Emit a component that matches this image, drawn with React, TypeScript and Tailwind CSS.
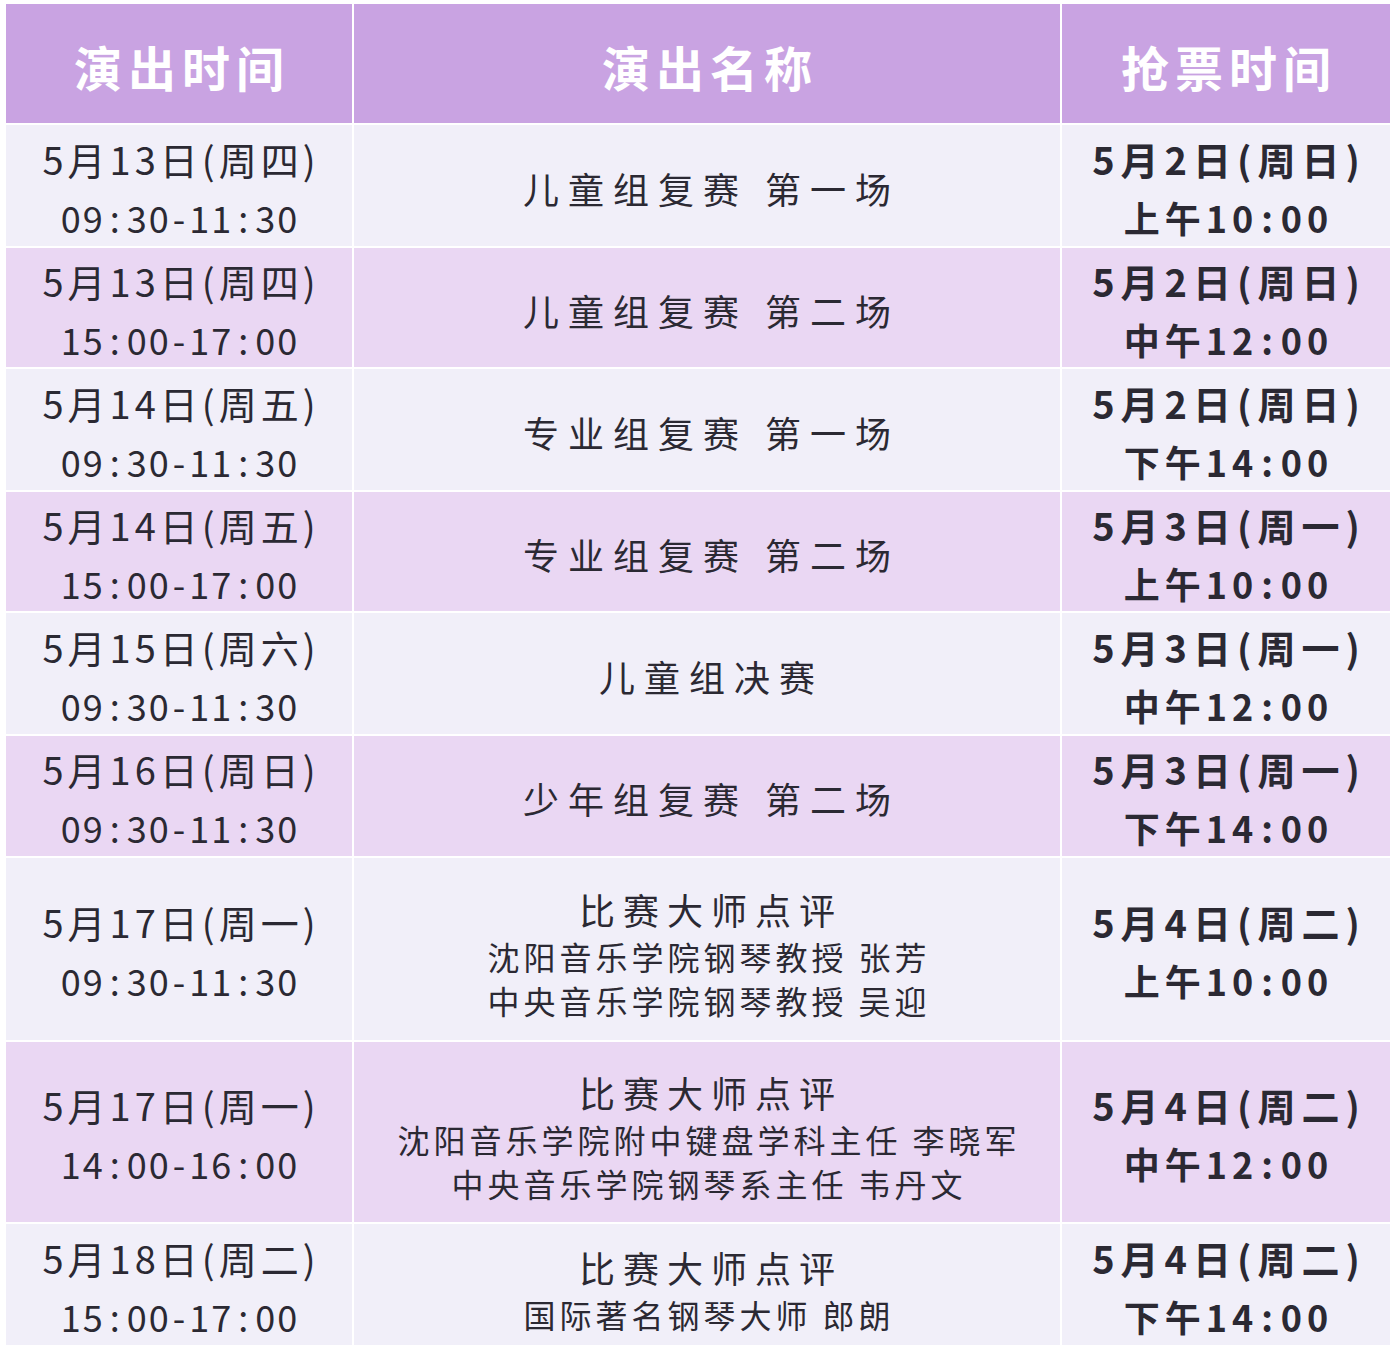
import React from "react";

type Row = {
  bg: string;
  d1: string;
  d2: string;
  title: string;
  subs?: string[];
  t1: string;
  t2: string;
};

const LIGHT = "bg-[#f1eff9]";
const DARK = "bg-[#ead7f3]";

const rows: Row[] = [
  { bg: LIGHT, d1: "5月13日(周四)", d2: "09:30-11:30", title: "儿童组复赛 第一场", t1: "5月2日(周日)", t2: "上午10:00" },
  { bg: DARK, d1: "5月13日(周四)", d2: "15:00-17:00", title: "儿童组复赛 第二场", t1: "5月2日(周日)", t2: "中午12:00" },
  { bg: LIGHT, d1: "5月14日(周五)", d2: "09:30-11:30", title: "专业组复赛 第一场", t1: "5月2日(周日)", t2: "下午14:00" },
  { bg: DARK, d1: "5月14日(周五)", d2: "15:00-17:00", title: "专业组复赛 第二场", t1: "5月3日(周一)", t2: "上午10:00" },
  { bg: LIGHT, d1: "5月15日(周六)", d2: "09:30-11:30", title: "儿童组决赛", t1: "5月3日(周一)", t2: "中午12:00" },
  { bg: DARK, d1: "5月16日(周日)", d2: "09:30-11:30", title: "少年组复赛 第二场", t1: "5月3日(周一)", t2: "下午14:00" },
  { bg: LIGHT, d1: "5月17日(周一)", d2: "09:30-11:30", title: "比赛大师点评", subs: ["沈阳音乐学院钢琴教授 张芳", "中央音乐学院钢琴教授 吴迎"], t1: "5月4日(周二)", t2: "上午10:00" },
  { bg: DARK, d1: "5月17日(周一)", d2: "14:00-16:00", title: "比赛大师点评", subs: ["沈阳音乐学院附中键盘学科主任 李晓军", "中央音乐学院钢琴系主任 韦丹文"], t1: "5月4日(周二)", t2: "中午12:00" },
  { bg: LIGHT, d1: "5月18日(周二)", d2: "15:00-17:00", title: "比赛大师点评", subs: ["国际著名钢琴大师 郎朗"], t1: "5月4日(周二)", t2: "下午14:00" },
];

const font = "font-['Noto_Sans_CJK_SC',sans-serif]";

function Time({ text, bold }: { text: string; bold?: boolean }) {
  const parts = text.split(/([:\-])/);
  return (
    <>
      {parts.map((p, i) =>
        p === ":" ? (
          <span key={i} className={bold ? "mx-[3px]" : "mx-[5px]"}>:</span>
        ) : p === "-" ? (
          <span key={i} className="mx-[2px]">-</span>
        ) : (
          <span key={i}>{p}</span>
        )
      )}
    </>
  );
}

export default function App() {
  return (
    <div className={`w-[1396px] h-[1352px] bg-white pt-[4px] pl-[6px] ${font}`}>
      <div className="grid grid-cols-[346px_706px_328px] grid-rows-[119px_121px_119px_121px_119px_121px_120px_182px_180px_121px] gap-[2px] w-[1384px]">
        {["演出时间", "演出名称", "抢票时间"].map((t) => (
          <div key={t} className="bg-[#c9a3e2] flex items-center justify-center pt-[4px]">
            <span className="text-white text-[48px] font-bold tracking-[6px] leading-none pl-[6px]">{t}</span>
          </div>
        ))}
        {rows.map((r, i) => (
          <React.Fragment key={i}>
            <div className={`${r.bg} flex flex-col items-center justify-center pt-[4px] text-[#2b2933] overflow-hidden`}>
              <div className="text-[38px] leading-[58px] tracking-[4px] pl-[4px] whitespace-nowrap">{r.d1}</div>
              <div className="text-[36px] leading-[58px] tracking-[2px] pl-[2px] whitespace-nowrap">
                <Time text={r.d2} />
              </div>
            </div>
            <div className={`${r.bg} flex flex-col items-center justify-center text-[#2b2933] overflow-hidden ${r.subs ? "pt-[8px]" : "pt-[4px]"}`}>
              {r.subs ? (
                <>
                  <div className="text-[36px] leading-[50px] tracking-[8px] pl-[8px] whitespace-nowrap">{r.title}</div>
                  {r.subs.map((s) => (
                    <div key={s} className="text-[32px] leading-[44px] tracking-[4px] pl-[4px] whitespace-nowrap">{s}</div>
                  ))}
                </>
              ) : (
                <div className="text-[36px] leading-[50px] tracking-[9px] pl-[9px] whitespace-nowrap">{r.title}</div>
              )}
            </div>
            <div className={`${r.bg} flex flex-col items-center justify-center pt-[4px] text-[#2b2933] font-bold overflow-hidden`}>
              <div className="text-[38px] leading-[58px] tracking-[6px] pl-[6px] whitespace-nowrap">{r.t1}</div>
              <div className="text-[36px] leading-[58px] tracking-[5px] pl-[5px] whitespace-nowrap">
                <Time text={r.t2} bold />
              </div>
            </div>
          </React.Fragment>
        ))}
      </div>
    </div>
  );
}
